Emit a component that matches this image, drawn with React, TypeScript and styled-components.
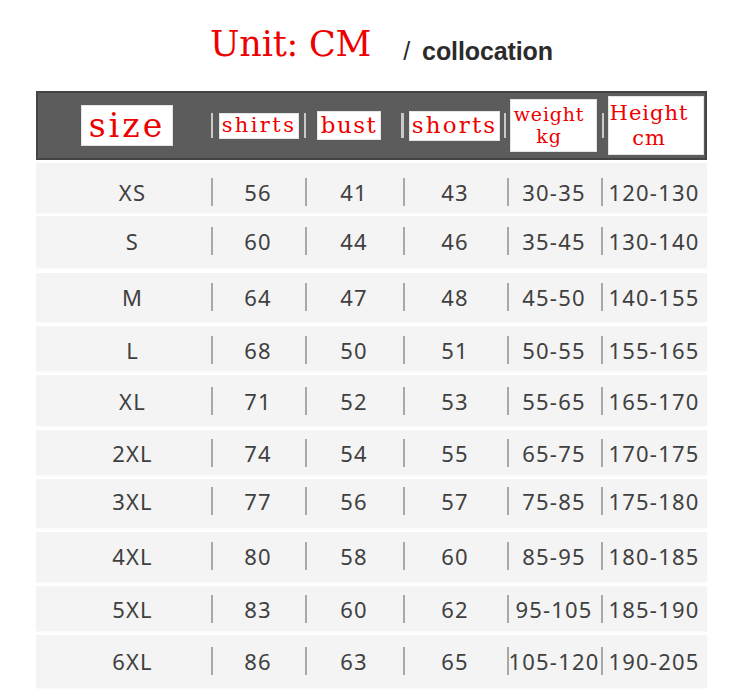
import styled, { createGlobalStyle } from "styled-components";

const GlobalStyle = createGlobalStyle`
  html, body {
    margin: 0;
    padding: 0;
    background: #ffffff;
  }
`;

const Page = styled.div`
  width: 748px;
  height: 697px;
  padding-left: 36px;
  box-sizing: border-box;
  background: #ffffff;
`;

const Title = styled.div`
  display: flex;
  align-items: flex-start;
  height: 91px;
  padding-left: 174px;
`;

const Unit = styled.span`
  margin-top: 27px;
  font-family: "DejaVu Serif", "Liberation Serif", serif;
  font-size: 35px;
  line-height: 1;
  letter-spacing: -0.2px;
  color: #ee0000;
  white-space: pre;
`;

const Collocation = styled.span`
  margin-top: 39px;
  margin-left: 32px;
  font-family: "Liberation Sans", Arial, sans-serif;
  font-size: 25px;
  line-height: 1;
  font-weight: 700;
  letter-spacing: -0.1px;
  color: #2b2b2b;
`;

const Slash = styled.span`
  font-weight: 400;
  margin-right: 12px;
`;

const HeaderBar = styled.div`
  display: flex;
  align-items: center;
  width: 671px;
  height: 69px;
  box-sizing: border-box;
  padding-left: 43px;
  background: #5c5c5c;
  border: 2px solid #444444;
`;

const HeaderSep = styled.div<{ $ml: number; $w?: number }>`
  margin-left: ${(p) => p.$ml}px;
  width: ${(p) => p.$w ?? 2}px;
  height: 25px;
  background: #c9c9c9;
  flex-shrink: 0;
`;

const Label = styled.div<{
  $ml: number;
  $w: number;
  $h: number;
  $fs: number;
  $ls: number;
  $pl?: number;
  $pr?: number;
}>`
  margin-left: ${(p) => p.$ml}px;
  width: ${(p) => p.$w}px;
  height: ${(p) => p.$h}px;
  flex-shrink: 0;
  box-sizing: border-box;
  padding: 0 ${(p) => p.$pr ?? 0}px 0 ${(p) => p.$pl ?? 0}px;
  display: flex;
  flex-direction: column;
  align-items: center;
  justify-content: center;
  background: #ffffff;
  border: 1px solid #e4e4e4;
  font-family: "DejaVu Serif", "Liberation Serif", serif;
  font-size: ${(p) => p.$fs}px;
  letter-spacing: ${(p) => p.$ls}px;
  line-height: 1.15;
  color: #ee0000;
  text-align: center;
  white-space: nowrap;
`;

const Rows = styled.div`
  display: flex;
  flex-direction: column;
  width: 671px;
  margin-top: 3px;
`;

const Row = styled.div<{ $h: number; $gap: number; $shift: number }>`
  display: grid;
  grid-template-columns: 175px 94px 98px 104px 94px 106px;
  align-items: center;
  height: ${(p) => p.$h}px;
  margin-top: ${(p) => p.$gap}px;
  box-sizing: border-box;
  padding-top: ${(p) => Math.max(p.$shift * 2, 0)}px;
  padding-bottom: ${(p) => Math.max(-p.$shift * 2, 0)}px;
  background: #f4f4f4;
  box-shadow: 0 1px 2px rgba(0, 0, 0, 0.03);

  &:first-child {
    margin-top: 0;
  }
`;

const SizeCell = styled.div`
  padding-left: 18px;
  text-align: center;
  font-family: "Noto Sans", "Open Sans", sans-serif;
  font-size: 22px;
  letter-spacing: 1.2px;
  color: #404040;
`;

const Cell = styled.div`
  position: relative;
  text-align: center;
  font-family: "Noto Sans", "Open Sans", sans-serif;
  font-size: 22px;
  letter-spacing: 1.2px;
  color: #404040;

  &::before {
    content: "";
    position: absolute;
    left: 0;
    top: 50%;
    width: 2px;
    height: 28px;
    margin-top: -14px;
    background: #a8a8a8;
  }
`;

const rows = [
  { size: "XS", v: ["56", "41", "43", "30-35", "120-130"], h: 50, gap: 0, shift: 4 },
  { size: "S", v: ["60", "44", "46", "35-45", "130-140"], h: 52, gap: 3, shift: -1 },
  { size: "M", v: ["64", "47", "48", "45-50", "140-155"], h: 49, gap: 5, shift: -1 },
  { size: "L", v: ["68", "50", "51", "50-55", "155-165"], h: 45, gap: 4, shift: 1 },
  { size: "XL", v: ["71", "52", "53", "55-65", "165-170"], h: 51, gap: 4, shift: 0 },
  { size: "2XL", v: ["74", "54", "55", "65-75", "170-175"], h: 45, gap: 4, shift: 0 },
  { size: "3XL", v: ["77", "56", "57", "75-85", "175-180"], h: 49, gap: 4, shift: -3 },
  { size: "4XL", v: ["80", "58", "60", "85-95", "180-185"], h: 50, gap: 4, shift: -1 },
  { size: "5XL", v: ["83", "60", "62", "95-105", "185-190"], h: 45, gap: 4, shift: 0 },
  { size: "6XL", v: ["86", "63", "65", "105-120", "190-205"], h: 53, gap: 4, shift: -1 },
];

export default function App() {
  return (
    <Page>
      <GlobalStyle />
      <Title>
        <Unit>Unit: CM</Unit>
        <Collocation>
          <Slash>/</Slash>collocation
        </Collocation>
      </Title>
      <HeaderBar>
        <Label $ml={0} $w={92} $h={41} $fs={33} $ls={3}>
          size
        </Label>
        <HeaderSep $ml={38} />
        <Label $ml={6} $w={80} $h={26} $fs={21} $ls={2.4}>
          shirts
        </Label>
        <HeaderSep $ml={5} />
        <Label $ml={11} $w={64} $h={29} $fs={23} $ls={1.5}>
          bust
        </Label>
        <HeaderSep $ml={20} $w={3} />
        <Label $ml={5} $w={91} $h={30} $fs={23} $ls={2.2}>
          shorts
        </Label>
        <HeaderSep $ml={4} />
        <Label $ml={4} $w={87} $h={53} $fs={19} $ls={0.8} $pl={4} $pr={13}>
          <span>weight</span>
          <span>kg</span>
        </Label>
        <HeaderSep $ml={5} />
        <Label $ml={4} $w={96} $h={59} $fs={21} $ls={1} $pl={4} $pr={18}>
          <span>Height</span>
          <span>cm</span>
        </Label>
      </HeaderBar>
      <Rows>
        {rows.map((r) => (
          <Row key={r.size} $h={r.h} $gap={r.gap} $shift={r.shift}>
            <SizeCell>{r.size}</SizeCell>
            {r.v.map((val, i) => (
              <Cell key={i}>{val}</Cell>
            ))}
          </Row>
        ))}
      </Rows>
    </Page>
  );
}
